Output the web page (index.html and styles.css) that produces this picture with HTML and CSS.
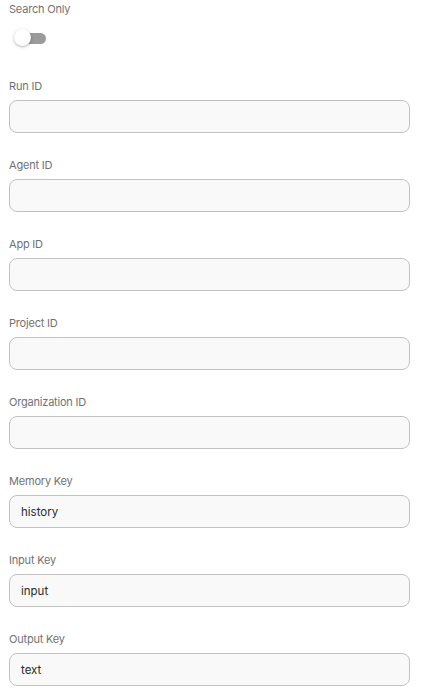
FILE: index.html
```html
<!DOCTYPE html>
<html>
<head>
<meta charset="utf-8">
<link rel="stylesheet" href="styles.css">
</head>
<body>
<div class="form">
  <div class="toggle-field">
    <div class="label">Search Only</div>
    <div class="switch"><span class="track"></span><span class="thumb"></span></div>
  </div>
  <div class="field"><div class="label">Run ID</div><div class="input"></div></div>
  <div class="field"><div class="label">Agent ID</div><div class="input"></div></div>
  <div class="field"><div class="label">App ID</div><div class="input"></div></div>
  <div class="field"><div class="label">Project ID</div><div class="input"></div></div>
  <div class="field"><div class="label">Organization ID</div><div class="input"></div></div>
  <div class="field"><div class="label">Memory Key</div><div class="input">history</div></div>
  <div class="field"><div class="label">Input Key</div><div class="input">input</div></div>
  <div class="field"><div class="label">Output Key</div><div class="input">text</div></div>
</div>
</body>
</html>
```
FILE: styles.css
```css
html, body { margin: 0; padding: 0; background: #fff; }
body { font-family: Inter, "Noto Sans", sans-serif; }
.form { padding: 1px 14px 0 9px; display: flex; flex-direction: column; gap: 24px; }
.label { font-size: 11px; line-height: 16px; color: #727272; letter-spacing: -0.2px; }
.toggle-field { display: flex; flex-direction: column; height: 53px; }
.switch { position: relative; width: 34px; height: 20px; margin-top: 11px; margin-left: 5px; }
.track { position: absolute; left: 3px; top: 5px; width: 29px; height: 11px; border-radius: 6px; background: #9b9b9b; }
.thumb { position: absolute; left: 0; top: 1px; width: 17px; height: 17px; border-radius: 50%; background: #fff; box-shadow: 0 1px 3px rgba(0,0,0,0.3); }
.field { display: flex; flex-direction: column; gap: 6px; }
.input { box-sizing: border-box; height: 33px; border: 1px solid #c2c2c2; border-radius: 8px; background: #f9f9f9; padding: 0 11px; display: flex; align-items: center; font-size: 11.5px; color: #2a2a2a; }
```
